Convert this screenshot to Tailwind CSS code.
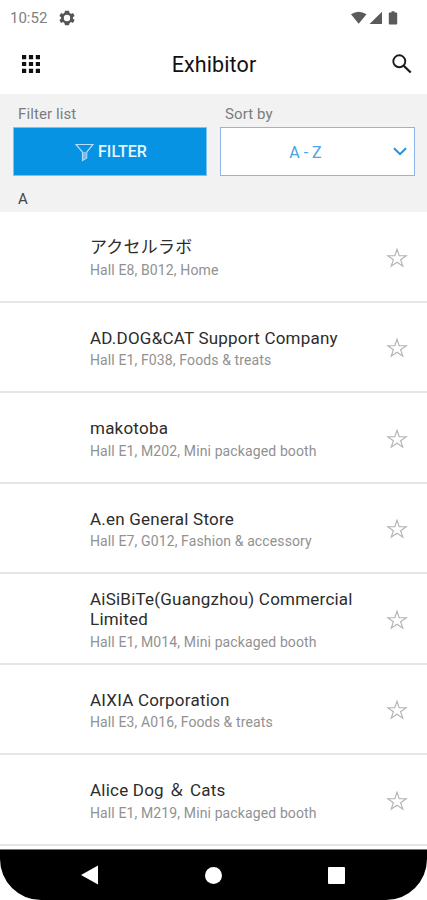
<!DOCTYPE html>
<html lang="en">
<head>
<meta charset="utf-8">
<title>Exhibitor</title>
<script src="https://cdn.jsdelivr.net/npm/@tailwindcss/browser@4"></script>
</head>
<body class="bg-white">
<svg class="hidden">
  <symbol id="star" viewBox="0 0 22 22"><path d="M11 2.3 13.2 8.7H20.2L14.6 12.7 16.8 19.2 11 15.2 5.2 19.2 7.4 12.7 1.8 8.7H8.8Z" fill="none" stroke="#b2b2b2" stroke-width="1.1" stroke-linejoin="miter"/></symbol>
</svg>
<div class="flex h-[900px] w-[427px] flex-col overflow-hidden bg-white font-['Roboto','Noto_Sans_CJK_JP',sans-serif]">
  <div class="flex h-[35px] shrink-0 items-center pl-[10px] pr-[28px]">
    <span class="w-[38px] pt-px text-[15px] whitespace-nowrap text-[#808080]">10:52</span>
    <svg class="ml-[11px] size-4" viewBox="2 2 20 20" fill="#555"><path fill-rule="evenodd" d="M19.400 13a7.500 7.500 0 0 0 0-2l2.100-1.600-2-3.500-2.500 1a7.300 7.300 0 0 0-1.700-1L14.500 3h-5L8.700 5.900a7.300 7.300 0 0 0-1.700 1l-2.500-1-2 3.500L4.600 11a7.500 7.500 0 0 0 0 2l-2.100 1.600 2 3.500 2.500-1a7.300 7.300 0 0 0 1.700 1l.8 2.900h5l.8-2.900a7.300 7.300 0 0 0 1.700-1l2.500 1 2-3.500zM12 16a4 4 0 1 1 0-8 4 4 0 0 1 0 8z"/></svg>
    <svg class="ml-auto h-[14px] w-[48px]" viewBox="0 0 48 14" fill="#5a5a5a"><path d="M0 3.300Q7.500-1.700 15.500 3.300L7.700 12.800zM18.500 13 31 .8V13zM40.500 1.500V.2h3v1.300H45.500q.7 0 .7.700v10.500q0 .7-.7.700h-7q-.7 0-.7-.7V2.200q0-.7.700-.7z"/></svg>
  </div>
  <header class="flex h-[59px] shrink-0 items-center justify-between pl-[22px] pr-[15px]">
    <svg class="mb-[2px] size-[18px]" viewBox="0 0 18 18" fill="#111"><path d="M0 0h4.200v4.200H0zM6.900 0h4.200v4.200H6.900zM13.800 0H18v4.200h-4.200zM0 6.900h4.200v4.200H0zM6.900 6.900h4.200v4.200H6.900zM13.800 6.900H18v4.200h-4.200zM0 13.800h4.200V18H0zM6.900 13.800h4.200V18H6.900zM13.800 13.800H18V18h-4.200z"/></svg>
    <h1 class="mr-[4px] pt-[2px] text-[21.5px] tracking-[0.1px] text-[#111]">Exhibitor</h1>
    <svg class="mb-[2px] size-[20px]" viewBox="0 0 20 20" fill="none" stroke="#1c1c1c"><circle cx="7.300" cy="7.300" r="6" stroke-width="1.900"/><path d="M11.700 11.700 18.700 18.500" stroke-width="2.300"/></svg>
  </header>
  <section class="h-[118px] shrink-0 bg-[#f2f2f2] px-[13px] pt-[10px]">
    <div class="grid grid-cols-2 gap-x-[13px]">
      <div>
        <div class="h-[23px] pl-[5px] text-[15px] leading-[21px] tracking-[0.1px] text-[#7c7c7c]">Filter list</div>
        <button class="flex h-[49px] w-full items-center justify-center gap-1 border border-[#7fc2f1] bg-[#0693e3] pl-[2px] pt-px text-[16px] font-medium text-[#e8f5ff]">
          <svg class="size-[19px]" viewBox="0 0 19 19" fill="none" stroke="#b9defa" stroke-width="1.200"><path d="M1 1.500H18L11.700 9.200V15L7.500 17.500V9.200Z"/><path d="M8 9h3.500v5.800L8 16.800z" fill="#7cbcf0" stroke="none"/></svg>
          <span>FILTER</span>
        </button>
      </div>
      <div>
        <div class="h-[23px] pl-[5px] text-[15px] leading-[21px] tracking-[0.1px] text-[#7c7c7c]">Sort by</div>
        <button class="flex h-[49px] w-[195px] items-center border border-[#8db5ea] bg-white pr-[7px] text-[16px] text-[#4aa3e6]">
          <span class="flex-1 pr-[3px] pt-[2px] text-center">A - Z</span>
          <svg class="h-[9px] w-[14px]" viewBox="0 0 14 9" fill="none" stroke="#2490e0" stroke-width="2"><path d="M1 1.200 7 7.200 13 1.200"/></svg>
        </button>
      </div>
    </div>
    <div class="pl-[5px] pt-[13px] text-[15px] leading-[21px] text-[#444]">A</div>
  </section>
  <main id="list" class="h-[637px] shrink-0 overflow-hidden"></main>
  <nav class="relative h-[51px] shrink-0 border-t border-[#777] bg-white">
    <div class="flex h-full items-center justify-between rounded-b-[41px] bg-black pl-[81px] pr-[82px]">
      <svg class="h-[20px] w-[17px]" viewBox="0 0 17 20" fill="#fff"><path d="M0 10 17 .5V19.500Z"/></svg>
      <span class="ml-px size-[17px] rounded-full bg-white"></span>
      <span class="size-[17px] rounded-[1px] bg-white"></span>
    </div>
  </nav>
</div>
<template id="row">
  <article class="flex h-[90.5px] items-center border-b-2 border-[#e6e6e6] pl-[90px] pr-[19px]">
    <div class="w-[275px] pt-[3px]">
      <h2 class="text-[17px] leading-[20.5px] tracking-[0.22px] text-[#2c2c2c]"></h2>
      <p class="pt-[3px] text-[14px] leading-[18px] tracking-[0.12px] whitespace-nowrap text-[#919191]"></p>
    </div>
    <svg class="ml-auto mt-[3px] size-[22px]"><use href="#star"/></svg>
  </article>
</template>
<script>
const exhibitors = [
  ["アクセルラボ", "Hall E8, B012, Home"],
  ["AD.DOG&CAT Support Company", "Hall E1, F038, Foods & treats"],
  ["makotoba", "Hall E1, M202, Mini packaged booth"],
  ["A.en General Store", "Hall E7, G012, Fashion & accessory"],
  ["AiSiBiTe(Guangzhou) Commercial Limited", "Hall E1, M014, Mini packaged booth"],
  ["AIXIA Corporation", "Hall E3, A016, Foods & treats"],
  ["Alice Dog ＆ Cats", "Hall E1, M219, Mini packaged booth"]
];
const list = document.getElementById("list"), row = document.getElementById("row");
for (const [name, place] of exhibitors) {
  const item = row.content.cloneNode(true);
  item.querySelector("h2").textContent = name;
  item.querySelector("p").textContent = place;
  list.append(item);
}
</script>
</body>
</html>
